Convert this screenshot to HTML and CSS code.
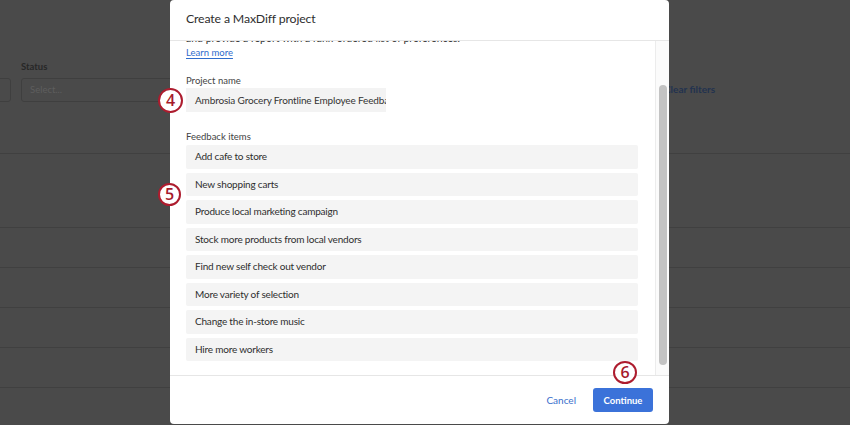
FILE: index.html
```html
<!DOCTYPE html>
<html lang="en">
<head>
<meta charset="utf-8">
<title>Create a MaxDiff project</title>
<link rel="stylesheet" href="styles.css">
</head>
<body>
<div class="page">
  <div class="filters">
    <div class="ghost-box"></div>
    <div class="filter">
      <div class="filter-label">Status</div>
      <div class="filter-select">Select...</div>
    </div>
    <div class="clear">Clear filters</div>
  </div>
  <div class="table">
    <div class="row row-tall"></div>
    <div class="row"></div>
    <div class="row"></div>
    <div class="row"></div>
    <div class="row"></div>
    <div class="row"></div>
  </div>

  <div class="modal">
    <div class="modal-header">Create a MaxDiff project</div>
    <div class="modal-body">
      <div class="modal-content">
        <p class="intro">and provide a report with a rank-ordered list of preferences.</p>
        <a class="learn">Learn more</a>
        <div class="label label-name">Project name</div>
        <div class="input">Ambrosia Grocery Frontline Employee Feedback</div>
        <div class="label label-items">Feedback items</div>
        <div class="items">
          <div class="item">Add cafe to store</div>
          <div class="item">New shopping carts</div>
          <div class="item">Produce local marketing campaign</div>
          <div class="item">Stock more products from local vendors</div>
          <div class="item">Find new self check out vendor</div>
          <div class="item">More variety of selection</div>
          <div class="item">Change the in-store music</div>
          <div class="item">Hire more workers</div>
        </div>
      </div>
      <div class="track"><div class="thumb"></div></div>
    </div>
    <div class="modal-footer">
      <button class="btn-cancel">Cancel</button>
      <button class="btn-continue">Continue</button>
    </div>
  </div>

  <div class="badge badge-4">4</div>
  <div class="badge badge-5">5</div>
  <div class="badge badge-6">6</div>
</div>
</body>
</html>
```
FILE: styles.css
```css
* { box-sizing: border-box; }
html, body { margin: 0; padding: 0; }
body { font-family: Lato, "Open Sans", sans-serif; }

.page {
  position: relative;
  width: 850px;
  height: 425px;
  overflow: hidden;
  background: #4a4a4a;
}

/* dimmed background page */
.filters {
  display: flex;
  align-items: flex-end;
  margin-left: -40px;
  padding-top: 60px;
  height: 102px;
}
.ghost-box {
  width: 51px;
  height: 24px;
  border: 1px solid #3f3f3f;
  border-radius: 3px;
}
.filter { margin-left: 10px; }
.filter-label {
  font-size: 9.5px;
  font-weight: 700;
  color: #272727;
  line-height: 14px;
  margin-bottom: 4px;
}
.filter-select {
  width: 160px;
  height: 24px;
  border: 1px solid #3f3f3f;
  border-radius: 3px;
  padding-left: 8px;
  font-size: 9.5px;
  line-height: 22px;
  color: #5e5e5e;
}
.clear {
  margin-left: 483px;
  margin-bottom: 7px;
  font-size: 10px;
  font-weight: 700;
  color: #22324f;
}

.table { margin-top: 51px; border-top: 1px solid #404040; }
.row { height: 40px; border-bottom: 1px solid #404040; }
.row-tall { height: 74px; }

/* modal */
.modal {
  position: absolute;
  left: 170px;
  top: 0;
  width: 499px;
  height: 424px;
  background: #fff;
  border-radius: 4px;
  display: flex;
  flex-direction: column;
  overflow: hidden;
}
.modal-header {
  height: 41px;
  flex: none;
  border-bottom: 1px solid #e6e6e6;
  padding: 0 16px 3px;
  display: flex;
  align-items: center;
  font-size: 12.3px;
  letter-spacing: -0.15px;
  color: #2e2e2e;
}
.modal-body {
  flex: 1;
  display: flex;
  min-height: 0;
}
.modal-content {
  flex: 1;
  padding: 0 17px 0 16px;
  overflow: hidden;
  display: flex;
  flex-direction: column;
  align-items: flex-start;
}
.intro {
  margin: -10px 0 0;
  font-size: 10.5px;
  line-height: 14px;
  color: #333;
  white-space: nowrap;
}
.learn {
  display: block;
  margin-top: 1px;
  font-size: 9.5px;
  line-height: 14px;
  color: #2f6ccc;
  text-decoration: underline;
  text-underline-offset: 2px;
}
.label {
  font-size: 9.5px;
  line-height: 14px;
  color: #444;
}
.label-name { margin-top: 14px; }
.label-items { margin-top: 18px; margin-bottom: 1px; }
.input {
  width: 200px;
  height: 24px;
  background: #f3f3f3;
  padding: 0 9px;
  font-size: 10px;
  letter-spacing: -0.15px;
  line-height: 24px;
  color: #333;
  white-space: nowrap;
  overflow: hidden;
}
.items {
  align-self: stretch;
  display: flex;
  flex-direction: column;
  gap: 4px;
}
.item {
  height: 23.5px;
  background: #f4f4f4;
  border-radius: 2px;
  padding-left: 9px;
  font-size: 10px;
  letter-spacing: -0.2px;
  line-height: 23.5px;
  color: #2e2e2e;
}
.track {
  width: 14px;
  flex: none;
  border-left: 1px solid #ececec;
  background: #fbfbfb;
  padding: 44px 2px 10px 3px;
  display: flex;
}
.thumb {
  flex: 1;
  background: #c3c3c3;
  border-radius: 4px;
}
.modal-footer {
  height: 49px;
  flex: none;
  border-top: 1px solid #e6e6e6;
  display: flex;
  align-items: center;
  justify-content: flex-end;
  padding-right: 16px;
  gap: 5px;
}
button { font-family: inherit; border: 0; cursor: pointer; }
.btn-cancel {
  background: none;
  color: #3a6fcc;
  font-size: 10px;
  padding: 0 12px;
  height: 24px;
}
.btn-continue {
  width: 60px;
  height: 24px;
  background: #3b72d9;
  color: #fff;
  border-radius: 3px;
  font-size: 9.5px;
  font-weight: 700;
}

/* callout badges */
.badge {
  position: absolute;
  border: 2.5px solid #ad1c2e;
  border-radius: 50%;
  background: #fff;
  color: #a51a2b;
  font-family: "Open Sans", sans-serif;
  font-weight: 600;
  font-size: 16px;
  text-align: center;
}
.badge-4 { left: 158px; top: 88px; width: 25px; height: 25px; line-height: 20px; }
.badge-5 { left: 158px; top: 183px; width: 23px; height: 23px; line-height: 18px; }
.badge-6 { left: 613px; top: 361px; width: 24px; height: 23px; line-height: 18px; }
```
